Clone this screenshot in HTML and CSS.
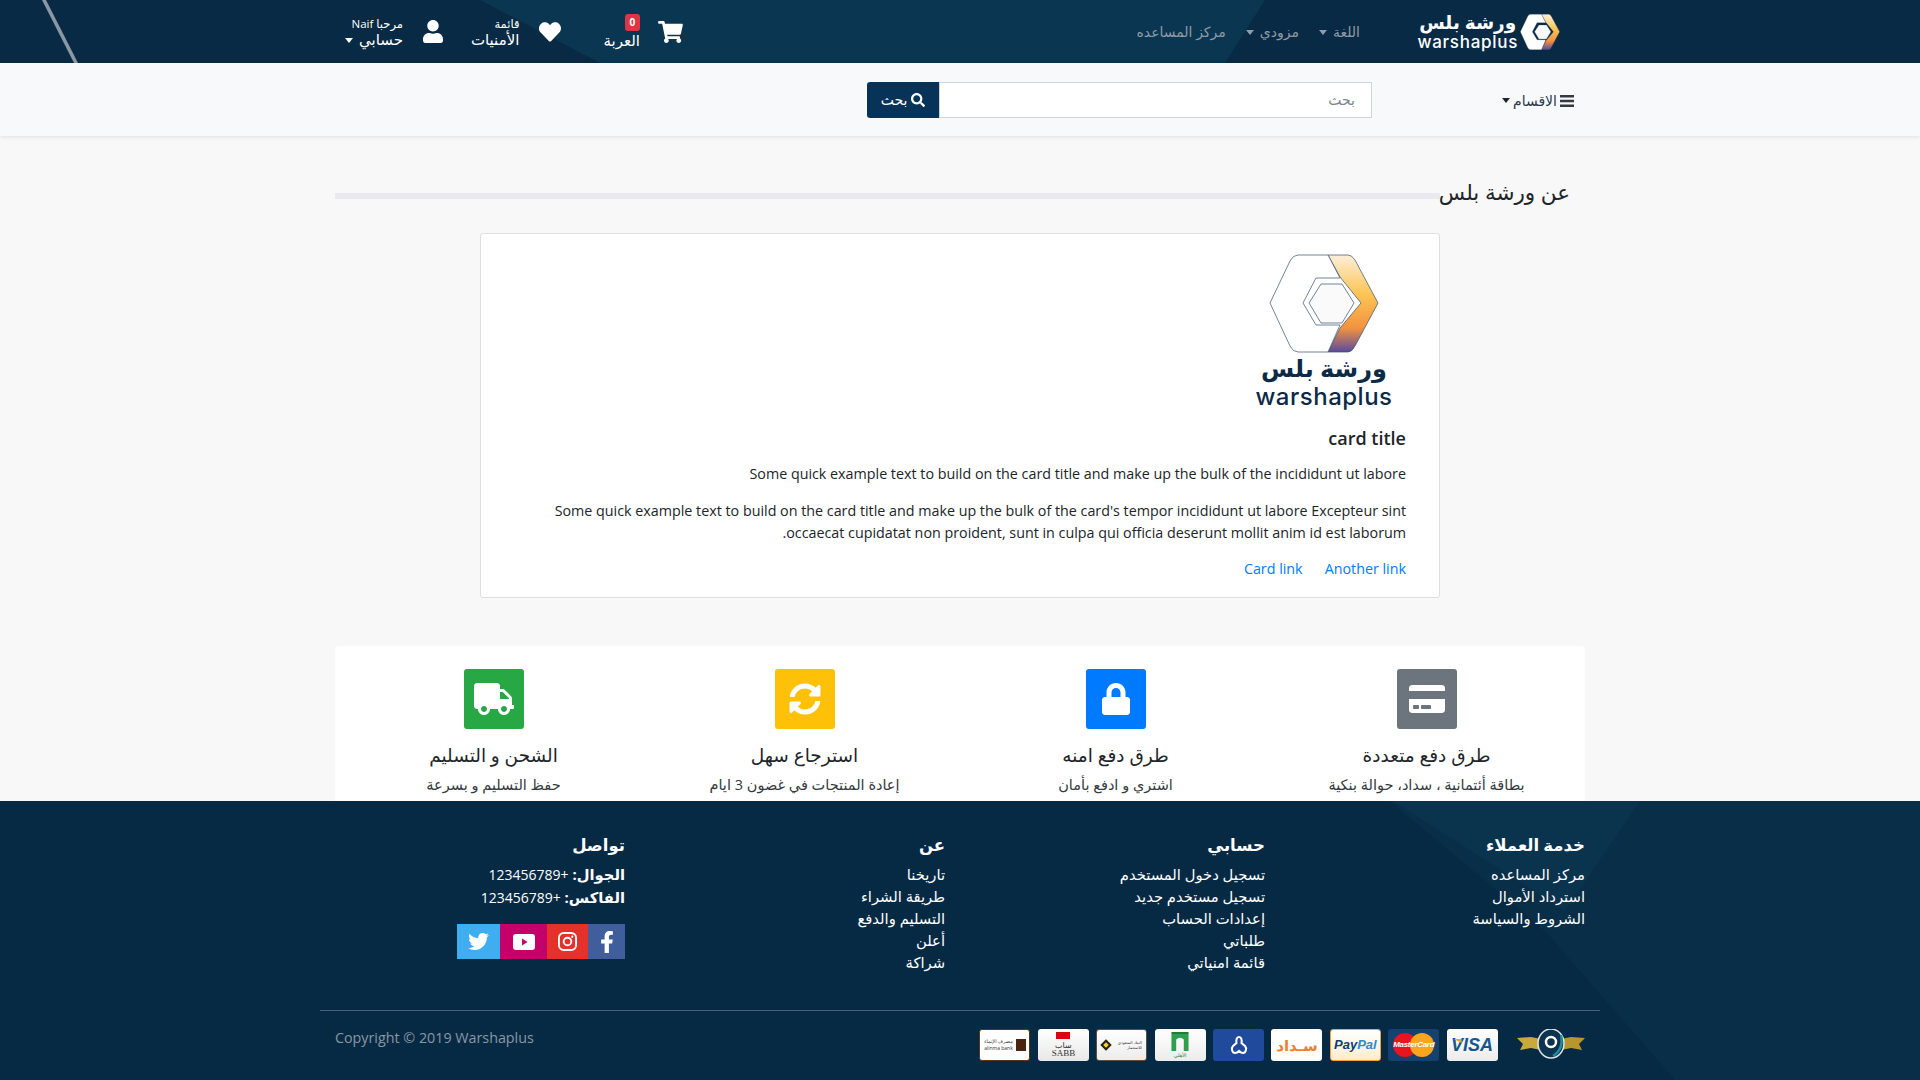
FILE: index.html
```html
<!DOCTYPE html>
<html lang="ar" dir="rtl">
<head>
    <meta charset="UTF-8">
    <meta name="viewport" content="width=device-width, initial-scale=1.0">
    <title>عن ورشة بلس</title>
    <link rel="stylesheet" href="styles.css">
</head>
<body>
    <svg class="defs" width="0" height="0" aria-hidden="true">
        <defs>
            <linearGradient id="hexOrange" x1="0" y1="0" x2="0" y2="1">
                <stop offset="0" stop-color="#fdeeda"/>
                <stop offset="0.4" stop-color="#fdc555"/>
                <stop offset="0.75" stop-color="#f3933f"/>
                <stop offset="1" stop-color="#5b4a9c"/>
            </linearGradient>
            <symbol id="hexMark" viewBox="-1 -1 110 99">
                <path d="M58 0H78Q82 0 85 5L108 48L85 91Q82 97 78 97H58L70 73L91 48L70 22Z" fill="url(#hexOrange)" stroke="#33506b" stroke-width=".7" stroke-linejoin="round"/>
                <path d="M28 0H58L70 23H46L33 48L46 70H70L58 97H28Q23 97 20 91L0 48L20 6Q23 0 28 0Z" fill="#fff" stroke="#33506b" stroke-width=".7" stroke-linejoin="round"/>
                <path d="M39 48L51 29H72L84 48L72 68H51Z" fill="#fafafa" stroke="#33506b" stroke-width=".7" stroke-linejoin="round"/>
            </symbol>
        </defs>
    </svg>

    <header class="topbar">
        <svg class="topbar-bg" viewBox="0 0 1920 63" preserveAspectRatio="none" aria-hidden="true">
            <polygon points="480,0 1265,0 1225,63 600,63" fill="#0a3651"/>
            <polygon points="42,0 46,0 78,63 74,63" fill="#8b97a3"/>
        </svg>
        <div class="topbar-inner">
            <a class="brand" href="#">
                <svg class="brand-mark" aria-hidden="true"><use href="#hexMark"/></svg>
                <span class="brand-words">
                    <span class="brand-ar">ورشة بلس</span>
                    <span class="brand-en" dir="ltr">warshaplus</span>
                </span>
            </a>
            <nav class="toplinks">
                <a href="#">اللغة<i class="caret"></i></a>
                <a href="#">مزودي<i class="caret"></i></a>
                <a href="#">مركز المساعده</a>
            </nav>
            <div class="usernav">
                <a class="usernav-item usernav-cart" href="#">
                    <svg class="ico-cart" viewBox="0 0 576 512" aria-hidden="true"><path d="M528.12 301.319l47.273-208C578.806 78.301 567.391 64 551.99 64H159.208l-9.166-44.81C147.758 8.021 137.93 0 126.529 0H24C10.745 0 0 10.745 0 24v16c0 13.255 10.745 24 24 24h69.883l70.248 343.435C147.325 417.1 136 435.222 136 456c0 30.928 25.072 56 56 56s56-25.072 56-56c0-15.674-6.447-29.835-16.824-40h209.647C430.447 426.165 424 440.326 424 456c0 30.928 25.072 56 56 56s56-25.072 56-56c0-22.172-12.888-41.332-31.579-50.405l5.517-24.276c3.413-15.018-8.002-29.319-23.403-29.319H218.117l-6.545-32h293.145c11.206 0 20.92-7.754 23.403-18.681z"/></svg>
                    <span class="usernav-text">
                        <b class="badge">0</b>
                        <span>العربة</span>
                    </span>
                </a>
                <a class="usernav-item usernav-wish" href="#">
                    <svg class="ico-heart" viewBox="0 0 512 512" aria-hidden="true"><path d="M462.3 62.6C407.5 15.9 326 24.3 275.7 76.2L256 96.5l-19.7-20.3C186.1 24.3 104.5 15.9 49.7 62.6c-62.8 53.6-66.1 149.8-9.9 207.9l193.5 199.8c12.5 12.9 32.8 12.9 45.3 0l193.5-199.8c56.3-58.1 53-154.3-9.8-207.9z"/></svg>
                    <span class="usernav-text">
                        <small>قائمة</small>
                        <span>الأمنيات</span>
                    </span>
                </a>
                <a class="usernav-item usernav-account" href="#">
                    <svg class="ico-user" viewBox="0 0 448 512" aria-hidden="true"><path d="M224 256c70.7 0 128-57.3 128-128S294.7 0 224 0 96 57.3 96 128s57.3 128 128 128zm89.6 32h-16.7c-22.2 10.2-46.9 16-72.9 16s-50.6-5.8-72.9-16h-16.7C60.2 288 0 348.2 0 422.4V464c0 26.5 21.5 48 48 48h352c26.5 0 48-21.5 48-48v-41.6c0-74.2-60.2-134.4-134.4-134.4z"/></svg>
                    <span class="usernav-text">
                        <small>مرحبا Naif</small>
                        <span>حسابي<i class="caret"></i></span>
                    </span>
                </a>
            </div>
        </div>
    </header>

    <div class="searchbar">
        <a class="cats" href="#">
            <svg class="ico-bars" viewBox="0 0 14 12" aria-hidden="true"><path d="M0 0h14v2.400H0zM0 4.800h14v2.400H0zM0 9.600h14V12H0z"/></svg>
            <span>الاقسام</span><i class="caret caret-dark"></i>
        </a>
        <form class="search">
            <input class="search-input" type="text" placeholder="بحث">
            <button class="search-btn" type="button">
                <svg class="ico-search" viewBox="0 0 512 512" aria-hidden="true"><path d="M505 442.7L405.3 343c-4.5-4.5-10.6-7-17-7H372c27.6-35.3 44-79.7 44-128C416 93.1 322.9 0 208 0S0 93.1 0 208s93.1 208 208 208c48.3 0 92.7-16.4 128-44v16.3c0 6.4 2.5 12.5 7 17l99.7 99.7c9.4 9.4 24.6 9.4 33.9 0l28.3-28.3c9.4-9.4 9.4-24.6.1-34zM208 336c-70.7 0-128-57.2-128-128 0-70.7 57.2-128 128-128 70.7 0 128 57.2 128 128 0 70.7-57.2 128-128 128z"/></svg>
                بحث
            </button>
        </form>
    </div>

    <main class="content">
        <div class="section-title">
            <h2>عن ورشة بلس</h2>
            <span class="section-line"></span>
        </div>

        <div class="card">
            <div class="card-logo">
                <svg class="card-mark" aria-hidden="true"><use href="#hexMark"/></svg>
                <span class="logo-ar">ورشة بلس</span>
                <span class="logo-en" dir="ltr">warshaplus</span>
            </div>
            <h5 class="card-title">card title</h5>
            <p class="card-text">Some quick example text to build on the card title and make up the bulk of the incididunt ut labore</p>
            <p class="card-text">Some quick example text to build on the card title and make up the bulk of the card's tempor incididunt ut labore Excepteur sint occaecat cupidatat non proident, sunt in culpa qui officia deserunt mollit anim id est laborum.</p>
            <div class="card-links">
                <a href="#">Another link</a>
                <a href="#">Card link</a>
            </div>
        </div>

        <section class="features">
            <div class="feature">
                <span class="feature-ico bg-grey">
                    <svg viewBox="0 0 576 512" width="36" height="32" aria-hidden="true"><path d="M0 432c0 26.5 21.5 48 48 48h480c26.5 0 48-21.5 48-48V256H0v176zm192-68c0-6.6 5.4-12 12-12h136c6.6 0 12 5.4 12 12v40c0 6.6-5.4 12-12 12H204c-6.6 0-12-5.4-12-12v-40zm-128 0c0-6.6 5.4-12 12-12h72c6.6 0 12 5.4 12 12v40c0 6.6-5.4 12-12 12H76c-6.6 0-12-5.4-12-12v-40zM576 80v48H0V80c0-26.5 21.5-48 48-48h480c26.5 0 48 21.5 48 48z"/></svg>
                </span>
                <h4>طرق دفع متعددة</h4>
                <p>بطاقة أئتمانية ، سداد، حوالة بنكية</p>
            </div>
            <div class="feature">
                <span class="feature-ico bg-blue">
                    <svg viewBox="0 0 448 512" width="28" height="32" aria-hidden="true"><path d="M400 224h-24v-72C376 68.2 307.8 0 224 0S72 68.2 72 152v72H48c-26.5 0-48 21.5-48 48v192c0 26.5 21.5 48 48 48h352c26.5 0 48-21.5 48-48V272c0-26.5-21.5-48-48-48zm-104 0H152v-72c0-39.7 32.3-72 72-72s72 32.3 72 72v72z"/></svg>
                </span>
                <h4>طرق دفع امنه</h4>
                <p>اشتري و ادفع بأمان</p>
            </div>
            <div class="feature">
                <span class="feature-ico bg-yellow">
                    <svg viewBox="0 0 512 512" width="32" height="32" aria-hidden="true"><path d="M370.72 133.28C339.458 104.008 298.888 87.962 255.848 88c-77.458.068-144.328 53.178-162.791 126.85-1.344 5.363-6.122 9.15-11.651 9.15H24.103c-7.498 0-13.194-6.807-11.807-14.176C33.933 94.924 134.813 8 256 8c66.448 0 126.791 26.136 171.315 68.685L463.03 40.97C478.149 25.851 504 36.559 504 57.941V192c0 13.255-10.745 24-24 24H345.941c-21.382 0-32.09-25.851-16.971-40.971l41.75-41.749zM32 296h134.059c21.382 0 32.09 25.851 16.971 40.971l-41.75 41.75c31.262 29.273 71.835 45.319 114.876 45.28 77.418-.07 144.315-53.144 162.787-126.849 1.344-5.363 6.122-9.15 11.651-9.15h57.304c7.498 0 13.194 6.807 11.807 14.176C478.067 417.076 377.187 504 256 504c-66.448 0-126.791-26.136-171.315-68.685L48.97 471.03C33.851 486.149 8 475.441 8 454.059V320c0-13.255 10.745-24 24-24z"/></svg>
                </span>
                <h4>استرجاع سهل</h4>
                <p>إعادة المنتجات في غضون 3 ايام</p>
            </div>
            <div class="feature">
                <span class="feature-ico bg-green">
                    <svg viewBox="0 0 640 512" width="40" height="32" aria-hidden="true"><path d="M624 352h-16V243.9c0-12.7-5.1-24.9-14.1-33.9L494 110.1c-9-9-21.2-14.1-33.9-14.1H416V48c0-26.5-21.5-48-48-48H48C21.5 0 0 21.5 0 48v320c0 26.5 21.5 48 48 48h16c0 53 43 96 96 96s96-43 96-96h128c0 53 43 96 96 96s96-43 96-96h48c8.8 0 16-7.2 16-16v-32c0-8.8-7.2-16-16-16zM160 464c-26.5 0-48-21.5-48-48s21.5-48 48-48 48 21.5 48 48-21.5 48-48 48zm320 0c-26.5 0-48-21.5-48-48s21.5-48 48-48 48 21.5 48 48-21.5 48-48 48zm80-208H416V144h44.1l99.9 99.9V256z"/></svg>
                </span>
                <h4>الشحن و التسليم</h4>
                <p>حفظ التسليم و بسرعة</p>
            </div>
        </section>
    </main>

    <footer class="footer">
        <svg class="footer-bg" viewBox="0 0 1920 279" preserveAspectRatio="none" aria-hidden="true">
            <polygon points="1390,0 1920,0 1920,279 1675,279 1545,130" fill="#092e48"/>
            <polygon points="1393,0 1640,0 1565,110" fill="#0a334e"/>
        </svg>
        <div class="footer-cols">
            <div class="footer-col">
                <h5>خدمة العملاء</h5>
                <a href="#">مركز المساعده</a>
                <a href="#">استرداد الأموال</a>
                <a href="#">الشروط والسياسة</a>
            </div>
            <div class="footer-col">
                <h5>حسابي</h5>
                <a href="#">تسجيل دخول المستخدم</a>
                <a href="#">تسجيل مستخدم جديد</a>
                <a href="#">إعدادات الحساب</a>
                <a href="#">طلباتي</a>
                <a href="#">قائمة امنياتي</a>
            </div>
            <div class="footer-col">
                <h5>عن</h5>
                <a href="#">تاريخنا</a>
                <a href="#">طريقة الشراء</a>
                <a href="#">التسليم والدفع</a>
                <a href="#">أعلن</a>
                <a href="#">شراكة</a>
            </div>
            <div class="footer-col">
                <h5>تواصل</h5>
                <p><b>الجوال:</b> <bdo class="phone" dir="ltr">123456789+</bdo></p>
                <p><b>الفاكس:</b> <bdo class="phone" dir="ltr">123456789+</bdo></p>
                <div class="socials">
                    <a class="soc soc-fb" href="#"><svg viewBox="0 0 320 512" width="14" height="22" aria-hidden="true"><path d="M279.14 288l14.22-92.66h-88.91v-60.13c0-25.35 12.42-50.06 52.24-50.06h40.42V6.26S260.43 0 225.36 0c-73.22 0-121.08 44.38-121.08 124.72v70.62H22.89V288h81.39v224h100.17V288z"/></svg></a>
                    <a class="soc soc-ig" href="#"><svg viewBox="0 0 20 20" width="19" height="19" aria-hidden="true"><rect x="1" y="1" width="18" height="18" rx="5" fill="none" stroke="#fff" stroke-width="2"/><circle cx="10" cy="10" r="4" fill="none" stroke="#fff" stroke-width="2"/><circle cx="15" cy="5" r="1.2"/></svg></a>
                    <a class="soc soc-yt" href="#"><svg viewBox="0 0 22 16" width="22" height="16" aria-hidden="true"><path fill-rule="evenodd" d="M3 0H19Q22 0 22 3V13Q22 16 19 16H3Q0 16 0 13V3Q0 0 3 0ZM9 4.600V11.400L14.600 8Z"/></svg></a>
                    <a class="soc soc-tw" href="#"><svg viewBox="0 0 512 512" width="21" height="21" aria-hidden="true"><path d="M459.37 151.716c.325 4.548.325 9.097.325 13.645 0 138.72-105.583 298.558-298.558 298.558-59.452 0-114.68-17.219-161.137-47.106 8.447.974 16.568 1.299 25.34 1.299 49.055 0 94.213-16.568 130.274-44.832-46.132-.975-84.792-31.188-98.112-72.772 6.498.974 12.995 1.624 19.818 1.624 9.421 0 18.843-1.3 27.614-3.573-48.081-9.747-84.143-51.98-84.143-102.985v-1.299c13.969 7.797 30.214 12.67 47.431 13.319-28.264-18.843-46.781-51.005-46.781-87.391 0-19.492 5.197-37.36 14.294-52.954 51.655 63.675 129.3 105.258 216.365 109.807-1.624-7.797-2.599-15.918-2.599-24.04 0-57.828 46.782-104.934 104.934-104.934 30.213 0 57.502 12.67 76.67 33.137 23.715-4.548 46.456-13.32 66.599-25.34-7.798 24.366-24.366 44.833-46.132 57.827 21.117-2.273 41.584-8.122 60.426-16.243-14.292 20.791-32.161 39.308-52.628 54.253z"/></svg></a>
                </div>
            </div>
        </div>
        <div class="footer-bottom">
            <div class="payments">
                <span class="seal">
                    <svg viewBox="0 0 68 30" width="68" height="30" aria-hidden="true">
                        <path d="M0 9L14 8L24 10L24 21L14 19L3 21L6 15Z" fill="#c9a83c"/>
                        <path d="M68 9L54 8L44 10L44 21L54 19L65 21L62 15Z" fill="#b8962f"/>
                        <ellipse cx="34" cy="14.500" rx="13" ry="14.500" fill="#0c3350" stroke="#dfe6ea" stroke-width="1.500"/>
                        <circle cx="34" cy="13" r="5" fill="none" stroke="#fff" stroke-width="2.500"/>
                        <path d="M44 6Q47 20 36 27" fill="none" stroke="#1d8e9c" stroke-width="2.500"/>
                    </svg>
                </span>
                <span class="pay pay-visa"><i class="visa-tip"></i>VISA</span>
                <span class="pay pay-mc">
                    <i class="mc-red"></i><i class="mc-yellow"></i><em>MasterCard</em>
                </span>
                <span class="pay pay-paypal"><b>Pay</b><b>Pal</b></span>
                <span class="pay pay-sadad">سـداد</span>
                <span class="pay pay-blue">
                    <svg viewBox="0 0 20 20" width="20" height="20" aria-hidden="true"><path d="M10 2C7.500 2 7 5 7.500 8L4 11C2 13 3 18 6 18C8 18 9 17 10 16C11 17 12 18 14 18C17 18 18 13 16 11L12.500 8C13 5 12.500 2 10 2Z" fill="none" stroke="#fff" stroke-width="2"/></svg>
                </span>
                <span class="pay pay-ncb">
                    <svg viewBox="0 0 22 20" width="22" height="19" aria-hidden="true"><path d="M2 20V2H20V20H15V8Q11 4 7 8V20Z" fill="#2e9e4f"/><path d="M2 0H20V2H2Z" fill="#1c7d3b"/></svg>
                    <small>الأهلي</small>
                </span>
                <span class="pay pay-sib">
                    <i class="sib-diamond"></i><small>البنك السعودي للاستثمار</small>
                </span>
                <span class="pay pay-sabb">
                    <i class="sabb-mark"></i>
                    <small>ساب</small>
                    <b>SABB</b>
                </span>
                <span class="pay pay-alinma">
                    <i class="alinma-mark"></i>
                    <small>مصرف الإنماء<br>alinma bank</small>
                </span>
            </div>
            <p class="copyright" dir="ltr">Copyright © 2019 Warshaplus</p>
        </div>
    </footer>
</body>
</html>
```

FILE: styles.css
```css
* {
    box-sizing: border-box;
}
html, body {
    margin: 0;
    padding: 0;
}
body {
    font-family: "Open Sans", "DejaVu Sans", sans-serif;
    font-size: 14px;
    line-height: 22px;
    color: #212529;
    background-color: #f8f8f8;
    height: 1080px;
    overflow: hidden;
}
a {
    color: inherit;
    text-decoration: none;
}
h2, h4, h5, p {
    margin: 0;
}
.defs {
    display: block;
    height: 0;
}

/* top bar */
.topbar {
    position: relative;
    height: 63px;
    background-color: #082a44;
}
.topbar-bg, .footer-bg {
    position: absolute;
    top: 0;
    left: 0;
    width: 100%;
    height: 100%;
}
.topbar-inner {
    position: relative;
    height: 63px;
    padding: 0 360px 0 345px;
    display: flex;
    align-items: center;
    color: #fff;
}
.brand {
    display: flex;
    align-items: center;
    gap: 2px;
    width: 150px;
    height: 42px;
    flex: none;
}
.brand-mark {
    width: 40px;
    height: 38px;
    flex: none;
}
.brand-words {
    display: flex;
    flex-direction: column;
    align-items: center;
    line-height: 21px;
}
.brand-ar {
    font-size: 18.5px;
    font-weight: bold;
    white-space: nowrap;
}
.brand-en {
    font-family: "Inter", sans-serif;
    font-size: 17px;
    font-weight: 500;
    letter-spacing: 0.7px;
}
.toplinks {
    display: flex;
    gap: 20px;
    margin-right: 50px;
    color: #8f9ba6;
    font-size: 14px;
}
.caret {
    display: inline-block;
    width: 0;
    height: 0;
    margin-right: 6px;
    vertical-align: 2px;
    border-top: 5px solid currentColor;
    border-left: 4px solid transparent;
    border-right: 4px solid transparent;
}
.caret-dark {
    color: #212529;
    margin-right: 0;
}
.usernav {
    display: flex;
    margin-right: auto;
    align-items: center;
}
.usernav-item {
    display: flex;
    align-items: center;
    font-size: 15px;
    line-height: 17px;
}
.usernav-text {
    display: flex;
    flex-direction: column;
    align-items: flex-start;
}
.usernav-text small {
    font-size: 11.5px;
    line-height: 15px;
}
.usernav-cart {
    gap: 18px;
}
.usernav-wish {
    gap: 19px;
    margin-right: 41px;
}
.usernav-account {
    gap: 20px;
    margin-right: 28px;
}
.ico-cart {
    width: 25px;
    height: 22px;
    fill: #fff;
}
.ico-heart {
    width: 24px;
    height: 22px;
    fill: #fff;
}
.ico-user {
    width: 20px;
    height: 23px;
    fill: #fff;
}
.badge {
    display: block;
    width: 15px;
    height: 17px;
    margin-bottom: 1px;
    background-color: #dc3545;
    border-radius: 3px;
    font-size: 10px;
    line-height: 17px;
    text-align: center;
}

/* search row */
.searchbar {
    height: 73px;
    padding: 0 346px 0 0;
    background-color: #f8f9fa;
    box-shadow: 0 1px 4px rgba(0, 0, 0, 0.1);
    display: flex;
    align-items: center;
    position: relative;
}
.cats {
    display: flex;
    align-items: center;
    gap: 3px;
    width: 72px;
    flex: none;
    padding-top: 2px;
    font-size: 14px;
    color: #2b3a4a;
}
.ico-bars {
    width: 14px;
    height: 12px;
    fill: #343a40;
    flex: none;
}
.search {
    display: flex;
    margin-right: 130px;
}
.search-input {
    width: 433px;
    height: 36px;
    padding: 0 16px;
    border: 1px solid #ced4da;
    background: #fff;
    font: 14px "Open Sans", "DejaVu Sans", sans-serif;
    outline: none;
}
.search-input::placeholder {
    color: #7a848d;
}
.search-btn {
    width: 72px;
    height: 36px;
    border: none;
    border-radius: 3px 0 0 3px;
    background-color: #083358;
    color: #fff;
    font: 14px "Open Sans", "DejaVu Sans", sans-serif;
    display: flex;
    align-items: center;
    justify-content: center;
    gap: 4px;
    cursor: pointer;
}
.ico-search {
    width: 14px;
    height: 14px;
    fill: #fff;
}

/* page content */
.content {
    width: 1250px;
    margin: 0 auto;
}
.section-title {
    display: flex;
    align-items: center;
    height: 44px;
    margin-top: 35px;
}
.section-title h2 {
    width: 145px;
    margin-top: -2px;
    padding-right: 15px;
    font-size: 21.5px;
    font-weight: 500;
    line-height: 44px;
    color: #212529;
    white-space: nowrap;
}
.section-line {
    flex: 1;
    height: 6px;
    margin-top: 6px;
    background-color: #e9e9ef;
}
.card {
    width: 960px;
    height: 365px;
    margin: 18px 145px 0 0;
    padding: 20px 33px 0;
    background-color: #fff;
    border: 1px solid #dedede;
    border-radius: 3px;
}
.card-logo {
    width: 136px;
    display: flex;
    flex-direction: column;
    align-items: center;
    margin-right: 14px;
    height: 155px;
}
.card-mark {
    width: 110px;
    height: 99px;
    flex: none;
}
.logo-ar {
    font-size: 24px;
    font-weight: bold;
    line-height: 30px;
    color: #0b2a48;
    white-space: nowrap;
}
.logo-en {
    font-family: "Inter", sans-serif;
    font-size: 24px;
    font-weight: 500;
    letter-spacing: 0.5px;
    line-height: 28px;
    color: #0b2a48;
}
.card-title {
    margin-top: 17px;
    font-size: 18px;
    font-weight: 600;
    line-height: 24px;
}
.card-text {
    margin-top: 13px;
    font-size: 14.3px;
    line-height: 22px;
}
.card-text + .card-text {
    margin-top: 15px;
}
.card-links {
    display: flex;
    gap: 22px;
    margin-top: 14px;
    font-size: 14.3px;
}
.card-links a {
    color: #007bff;
}
.features {
    height: 155px;
    margin-top: 48px;
    padding: 23px 3px 0;
    background-color: #fff;
    border-radius: 3px 3px 0 0;
    display: grid;
    grid-template-columns: repeat(4, 1fr);
    overflow: hidden;
}
.feature {
    display: flex;
    flex-direction: column;
    align-items: center;
}
.feature-ico {
    width: 60px;
    height: 60px;
    border-radius: 3px;
    display: flex;
    align-items: center;
    justify-content: center;
}
.feature-ico svg {
    fill: #fff;
}
.bg-grey { background-color: #6c757d; }
.bg-blue { background-color: #007bff; }
.bg-yellow { background-color: #ffc107; }
.bg-green { background-color: #28a745; }
.feature h4 {
    margin-top: 12px;
    font-size: 18.5px;
    font-weight: 500;
    line-height: 28px;
}
.feature p {
    margin-top: 5px;
    font-size: 14.5px;
    line-height: 22px;
    color: #343a40;
}

/* footer */
.footer {
    position: relative;
    height: 279px;
    background-color: #072a44;
    color: #fff;
}
.footer-cols {
    position: relative;
    width: 1280px;
    margin: 0 auto;
    height: 210px;
    padding-top: 30px;
    display: grid;
    grid-template-columns: repeat(4, 320px);
    border-bottom: 1px solid #46607a;
}
.footer-col {
    padding: 0 15px;
    display: flex;
    flex-direction: column;
    align-items: flex-start;
    font-size: 14.75px;
    line-height: 22px;
}
.footer-col h5 {
    font-size: 16.5px;
    font-weight: bold;
    line-height: 28px;
    margin-bottom: 4px;
}
.phone {
    font-size: 14px;
    letter-spacing: -0.8px;
}
.socials {
    display: flex;
    height: 35px;
    margin-top: 15px;
}
.soc {
    display: flex;
    align-items: center;
    justify-content: center;
    height: 35px;
}
.soc svg {
    fill: #fff;
}
.soc-fb { width: 37px; background-color: #3f5e9b; }
.soc-ig { width: 41px; background-color: #e4322b; }
.soc-yt { width: 47px; background-color: #c6006b; }
.soc-tw { width: 43px; background-color: #3eaef0; }
.footer-bottom {
    position: relative;
    width: 1280px;
    margin: 0 auto;
    padding: 15px 15px 0;
    display: flex;
    justify-content: space-between;
}
.copyright {
    margin-top: 1px;
    font-size: 14.3px;
    color: #8797a5;
}
.payments {
    display: flex;
    gap: 7.4px;
    align-items: flex-start;
    margin-top: 3px;
}
.seal {
    width: 68px;
    height: 30px;
    margin-left: 12px;
}
.pay {
    position: relative;
    width: 51px;
    height: 32px;
    border-radius: 3px;
    background-color: #fff;
    display: flex;
    align-items: center;
    justify-content: center;
    overflow: hidden;
    color: #333;
}
.pay-visa {
    background: linear-gradient(#fff, #ececec);
    font-family: "Liberation Sans", sans-serif;
    font-size: 18px;
    font-weight: bold;
    font-style: italic;
    color: #16568f;
}
.visa-tip {
    position: absolute;
    top: 10px;
    left: 7px;
    width: 8px;
    height: 4px;
    background-color: #efa52b;
    clip-path: polygon(0 0, 100% 0, 100% 100%);
}
.pay-mc {
    background-color: #14416f;
}
.mc-red, .mc-yellow {
    position: absolute;
    top: 4px;
    width: 24px;
    height: 24px;
    border-radius: 50%;
}
.mc-red {
    left: 5px;
    background-color: #e8141f;
}
.mc-yellow {
    left: 22px;
    background-color: #fba51c;
}
.pay-mc em {
    position: relative;
    font-family: "Liberation Sans", sans-serif;
    font-size: 8px;
    font-style: italic;
    font-weight: bold;
    color: #fff;
    letter-spacing: -0.3px;
}
.pay-paypal {
    direction: ltr;
    background: linear-gradient(#fff, #fdeccb);
    border: 1px solid #f2a33a;
    font-family: "Liberation Sans", sans-serif;
    font-size: 13px;
    font-style: italic;
}
.pay-paypal b:first-child { color: #123a80; }
.pay-paypal b:last-child { color: #2a8cd0; }
.pay-sadad {
    font-size: 15px;
    font-weight: bold;
    color: #ef7f2d;
}
.pay-blue {
    background-color: #204a9c;
}
.pay-ncb {
    flex-direction: column;
    background: linear-gradient(#fff, #ececec);
    line-height: 8px;
}
.pay-ncb small {
    font-size: 5px;
    color: #2e7d3e;
}
.pay-sib {
    gap: 2px;
    background: linear-gradient(#fff, #ececec);
    border: 1px solid #5a5146;
    flex-direction: row-reverse;
}
.sib-diamond {
    width: 8px;
    height: 8px;
    flex: none;
    background-color: #f2d02a;
    border: 2px solid #222;
    transform: rotate(45deg);
}
.pay-sib small {
    width: 30px;
    font-size: 4px;
    line-height: 5px;
}
.pay-sabb {
    flex-direction: column;
    background: linear-gradient(#fff, #e8e8e8);
    line-height: 9px;
}
.sabb-mark {
    width: 14px;
    height: 7px;
    background-color: #db0011;
    margin-bottom: 1px;
}
.pay-sabb small {
    font-size: 8px;
}
.pay-sabb b {
    font-family: "Liberation Serif", serif;
    font-size: 9px;
    font-weight: normal;
}
.pay-alinma {
    gap: 3px;
    border: 1px solid #5e3216;
}
.alinma-mark {
    width: 10px;
    height: 12px;
    flex: none;
    background-color: #4a2410;
}
.pay-alinma small {
    font-size: 5px;
    line-height: 7px;
    white-space: nowrap;
}
```
